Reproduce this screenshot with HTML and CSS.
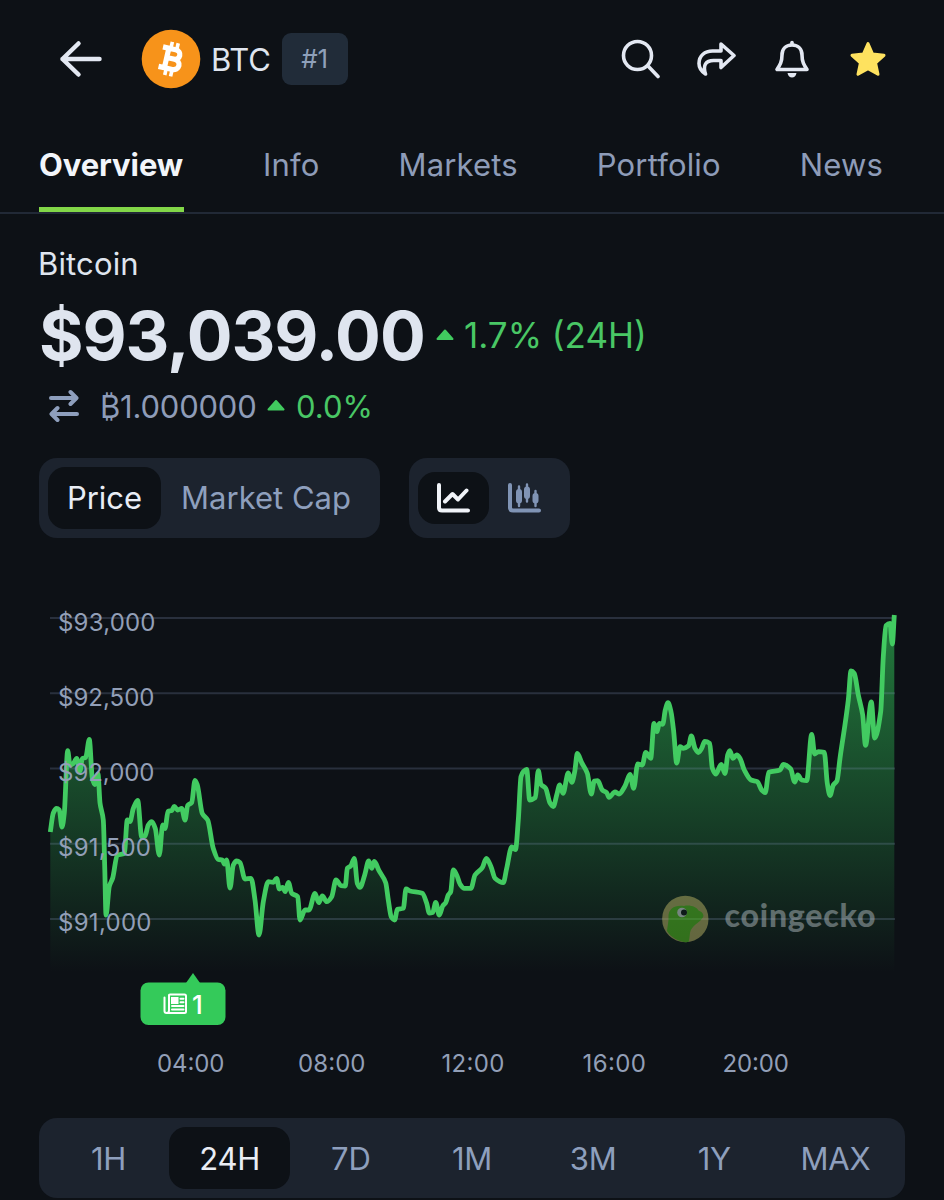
FILE: index.html
```html
<!DOCTYPE html>
<html lang="en">
<head>
    <meta charset="UTF-8">
    <meta name="viewport" content="width=device-width, initial-scale=1.0">
    <title>BTC - Bitcoin Price</title>
    <link rel="stylesheet" href="styles.css">
</head>
<body>
    <header class="topbar">
        <svg class="back" width="44" height="40" viewBox="0 0 44 40">
            <path d="M41.500 20H4.500M20.500 4.500L4.500 20L20.500 35.500"/>
        </svg>
        <svg class="coin" width="60" height="60" viewBox="0 0 60 60">
            <circle cx="30" cy="30" r="29.300" fill="#f7931a"/>
            <g transform="rotate(13 30 30)" fill="none" stroke="#fff">
                <path d="M19.500 20H32.500C39.500 20 39.500 29.500 32.500 29.500H25.500M32.500 29.500C41.500 29.500 41.500 40 32.500 40H19.500M25.500 20V40" stroke-width="5.200"/>
                <path d="M27.500 13V19M33.500 13V19M27.500 41V47M33.500 41V47" stroke-width="3.600"/>
            </g>
        </svg>
        <span class="symbol">BTC</span>
        <span class="rank">#1</span>
        <div class="actions">
            <!-- Search -->
            <svg width="40" height="40" viewBox="0 0 40 40">
                <circle cx="17.500" cy="16.500" r="14"/>
                <path d="M28 27L38 37.500"/>
            </svg>
            <!-- Share -->
            <svg width="40" height="40" viewBox="0 0 40 40">
                <path d="M25 5L38 16.500L25 28.500V21.500H17.500C10 21.500 6.500 26 9.500 35C5 32 3 28.500 3 24.500C3 16.500 9 12 16.500 12H25Z"/>
            </svg>
            <!-- Alerts -->
            <svg width="40" height="40" viewBox="0 0 40 40">
                <path d="M20 6C13.500 6 10 10.500 10 16C10 23 8 26 5 30.500H35C32 26 30 23 30 16C30 10.500 26.500 6 20 6Z"/>
                <path d="M20 3.500V5.500"/>
                <path class="solid" d="M15.500 34H24.500C23.500 40 16.500 40 15.500 34Z"/>
            </svg>
            <!-- Favourite -->
            <svg width="40" height="40" viewBox="0 0 40 40">
                <path class="star" d="M20 4.500L24.600 15L36 16.300L27.600 24L30 35.300L20 29.800L10 35.300L12.400 24L4 16.300L15.400 15Z"/>
            </svg>
        </div>
    </header>

    <nav class="tabs">
        <a class="tab active">Overview</a>
        <a class="tab">Info</a>
        <a class="tab">Markets</a>
        <a class="tab">Portfolio</a>
        <a class="tab">News</a>
    </nav>

    <main>
        <div class="name">Bitcoin</div>
        <div class="price-row">
            <span class="price">$93,039.00</span>
            <svg class="up" width="18" height="12" viewBox="0 0 18 12"><path d="M9 1.500L16.500 10H1.500Z"/></svg>
            <span class="change">1.7% (24H)</span>
        </div>
        <div class="btc-row">
            <svg class="swap" width="30" height="34" viewBox="0 0 30 34">
                <path d="M2 9H27M21.500 3L27.500 9L21.500 15M28 25H3M8.500 19L2.500 25L8.500 31"/>
            </svg>
            <span class="btc-price">₿1.000000</span>
            <svg class="up" width="18" height="12" viewBox="0 0 18 12"><path d="M9 1L16.500 9.500H1.500Z"/></svg>
            <span class="btc-change">0.0%</span>
        </div>

        <div class="controls">
            <div class="switch">
                <span class="option selected">Price</span>
                <span class="option cap">Market Cap</span>
            </div>
            <div class="switch icons">
                <span class="icon-option selected">
                    <svg width="36" height="32" viewBox="0 0 36 32">
                        <path d="M3 3V25.500Q3 28.500 6 28.500H32M9 19.500L16.500 12L22 17.500L30.500 8.500"/>
                    </svg>
                </span>
                <span class="icon-option">
                    <svg width="36" height="32" viewBox="0 0 36 32">
                        <path d="M3 3V25.500Q3 28.500 6 28.500H32"/>
                        <path class="wick" d="M12 4.500V24M20 2.500V19.500M28.500 9V24"/>
                        <path class="candle" d="M12 10V18.500M20 7.500V14M28.500 14V18.500"/>
                    </svg>
                </span>
            </div>
        </div>

        <svg class="chart" width="944" height="520" viewBox="0 580 944 520">
            <defs>
                <linearGradient id="areaFill" gradientUnits="userSpaceOnUse" x1="0" y1="615" x2="0" y2="972">
                    <stop offset="0" stop-color="#2eb552" stop-opacity="0.650"/>
                    <stop offset="1" stop-color="#2eb552" stop-opacity="0"/>
                </linearGradient>
            </defs>
            <path id="area" fill="url(#areaFill)"/>
            <path class="grid" d="M50 618H895M50 693.300H895M50 768.500H895M50 843.800H895M50 919H895"/>
            <path id="line" class="line"/>

            <!-- Price axis -->
            <g class="axis">
                <text x="58" y="630.500" textLength="97.500">$93,000</text>
                <text x="58" y="705.500" textLength="96.500">$92,500</text>
                <text x="58" y="781" textLength="96.500">$92,000</text>
                <text x="58" y="856" textLength="93">$91,500</text>
                <text x="58" y="931.300" textLength="93.500">$91,000</text>
            </g>

            <!-- Watermark -->
            <g class="watermark">
                <circle cx="685.300" cy="919" r="23.200" fill="#b9b265"/>
                <path d="M668.500 917C668 908 676 904.500 684 906C690 904.500 697 907 698.500 910.500C703 912 705 916 702 918.500C699 923 691 926 690 933C689.500 937 689.500 939 688.500 942C681 943 671 938 667 931C667.500 926 668.800 921 668.500 917Z" fill="#56c51f"/>
                <circle cx="682" cy="912.500" r="4.800" fill="#dde6e6"/>
                <circle cx="684" cy="912.500" r="3" fill="#0d1217"/>
                <text x="724.500" y="927" textLength="151">coingecko</text>
            </g>

            <!-- News marker -->
            <path d="M186 983L193 973L200 983Z" fill="#34ca5a"/>
            <rect x="140.500" y="982.500" width="85" height="42.500" rx="8" fill="#34ca5a"/>
            <g class="news">
                <path d="M169 995.500Q169 994.500 170 994.500H184.500Q186 994.500 186 996V1011.500Q186 1013 184.500 1013H166.500Q164.500 1013 164.500 1011V997.500M169 995V1010.500Q169 1013 166.500 1013"/>
                <path d="M180.500 998.800H183.500M180.500 1002.300H183.500M172 1006H183.500M172 1009.500H183.500"/>
                <rect x="172" y="998" width="5.500" height="5" fill="#fff"/>
            </g>
            <text class="news-count" x="192" y="1013.500">1</text>

            <!-- Time axis -->
            <g class="axis">
                <text x="157" y="1072" textLength="67.500">04:00</text>
                <text x="298" y="1072" textLength="67.500">08:00</text>
                <text x="441.500" y="1072" textLength="63">12:00</text>
                <text x="582.500" y="1072" textLength="63.500">16:00</text>
                <text x="722.500" y="1072" textLength="66.500">20:00</text>
            </g>
        </svg>

        <div class="ranges">
            <span>1H</span>
            <span class="selected">24H</span>
            <span>7D</span>
            <span>1M</span>
            <span>3M</span>
            <span>1Y</span>
            <span>MAX</span>
        </div>
    </main>
    <script src="chart.js"></script>
</body>
</html>
```
FILE: styles.css
```css
* {
    box-sizing: border-box;
}
body {
    margin: 0;
    width: 944px;
    height: 1200px;
    overflow: hidden;
    background: #0d1116;
    color: #dfe5ef;
    font-family: Inter, "Liberation Sans", sans-serif;
}
svg {
    display: block;
    flex: none;
}
.topbar {
    display: flex;
    align-items: center;
    height: 118px;
    padding: 0 56px 0 58px;
}
.back {
    fill: none;
    stroke: #e3e8f2;
    stroke-width: 4.5;
    stroke-linecap: round;
    stroke-linejoin: round;
}
.coin {
    margin-left: 39px;
}
.symbol {
    margin-left: 10px;
    font-size: 31px;
    letter-spacing: -0.2px;
}
.rank {
    width: 66px;
    height: 52px;
    margin-left: 11px;
    border-radius: 9px;
    background: #212c39;
    color: #8fa0ba;
    font-size: 26px;
    line-height: 52px;
    text-align: center;
}
.actions {
    display: flex;
    gap: 36px;
    margin-left: auto;
    fill: none;
    stroke: #e3e8f2;
    stroke-width: 3.6;
    stroke-linecap: round;
    stroke-linejoin: round;
}
.actions .solid {
    fill: #e3e8f2;
    stroke: none;
}
.actions .star {
    fill: #fee25f;
    stroke: #fee25f;
    stroke-width: 3;
}
.tabs {
    display: flex;
    justify-content: space-between;
    height: 96px;
    padding: 0 61px 0 39px;
    border-bottom: 2px solid #212936;
}
.tab {
    height: 94px;
    padding-top: 27px;
    color: #8e9cb8;
    font-size: 31px;
    line-height: 40px;
    letter-spacing: 0.15px;
}
.tab.active {
    width: 145px;
    border-bottom: 5px solid #82d748;
    color: #f2f5fa;
    font-weight: 700;
    letter-spacing: -0.1px;
}
.name {
    margin: 30px 0 0 38px;
    font-size: 31px;
    line-height: 40px;
    letter-spacing: 0.15px;
}
.price-row {
    display: flex;
    align-items: center;
    height: 82px;
    margin-top: 10px;
    padding-left: 39px;
}
.price {
    width: 397px;
    font-size: 68px;
    font-weight: 700;
    letter-spacing: -1.05px;
    white-space: nowrap;
}
.up path {
    fill: #41cb5f;
    stroke: #41cb5f;
    stroke-width: 2;
    stroke-linejoin: round;
}
.change {
    margin-left: 10px;
    color: #49c765;
    font-size: 35px;
}
.btc-row {
    display: flex;
    align-items: center;
    height: 40px;
    margin-top: 10px;
    padding-left: 49px;
}
.swap {
    fill: none;
    stroke: #8e9fbd;
    stroke-width: 4;
    stroke-linecap: round;
    stroke-linejoin: round;
}
.btc-price {
    width: 167px;
    margin-left: 21px;
    color: #8e9cb8;
    font-size: 31px;
    letter-spacing: -0.2px;
    white-space: nowrap;
}
.btc-change {
    margin-left: 11px;
    color: #49c765;
    font-size: 31px;
}
.controls {
    display: flex;
    gap: 29px;
    margin-top: 32px;
    padding-left: 39px;
}
.switch {
    display: flex;
    align-items: center;
    width: 341px;
    height: 80px;
    padding: 0 9px;
    border-radius: 18px;
    background: #1c232e;
}
.switch.icons {
    width: 161px;
}
.selected {
    background: #0d1116;
    color: #e9edf5;
}
.option {
    height: 62px;
    border-radius: 17px;
    font-size: 31px;
    line-height: 62px;
    text-align: center;
}
.option.selected {
    width: 113px;
}
.option.cap {
    flex: 1;
    color: #8e9fbd;
}
.icon-option {
    display: flex;
    align-items: center;
    justify-content: center;
    width: 71px;
    height: 52px;
    border-radius: 17px;
    fill: none;
    stroke: #8094b5;
    stroke-width: 4;
    stroke-linecap: round;
    stroke-linejoin: round;
}
.icon-option.selected {
    stroke: #f1f4f9;
}
.icon-option .wick {
    stroke-width: 2.4;
}
.icon-option .candle {
    stroke-width: 6;
}
.chart {
    margin-top: 42px;
}
.grid {
    fill: none;
    stroke: #8ca0c8;
    stroke-opacity: 0.22;
    stroke-width: 2;
}
.line {
    fill: none;
    stroke: #42cb61;
    stroke-width: 4.8;
    stroke-linejoin: round;
}
.axis {
    fill: #929fb7;
    font-size: 24px;
}
.watermark {
    opacity: 0.5;
}
.watermark text {
    fill: #aeb8bd;
    font-family: Lato, sans-serif;
    font-size: 32px;
    font-weight: 900;
}
.news {
    fill: none;
    stroke: #fff;
    stroke-width: 2;
    stroke-linecap: round;
}
.news-count {
    fill: #fff;
    font-size: 26px;
    font-weight: 500;
}
.ranges {
    display: grid;
    grid-template-columns: repeat(7, 1fr);
    width: 866px;
    height: 80px;
    margin: 18px 0 0 39px;
    padding: 9px;
    border-radius: 18px;
    background: #1c232e;
    color: #8e9fbd;
    font-size: 31px;
    line-height: 63px;
    letter-spacing: -0.2px;
    text-align: center;
}
.ranges span {
    height: 62px;
    border-radius: 17px;
}
```
FILE: chart.js
```js
// price line over the last 24 hours, in chart coordinates
const points = [
    [50.3, 832], [53.3, 813], [56.5, 808.5], [59.3, 810], [62, 827], [64.3, 813], [67.7, 750.7], [70, 765],
    [73.3, 763.5], [76.7, 758.5], [80, 771], [82.3, 758.5], [85.7, 757.5], [89.3, 739.5], [92.3, 778], [94.7, 784.5],
    [98, 774], [100, 803], [103.3, 820], [104.8, 870], [106, 915], [109.3, 886.5], [112.7, 878], [117.3, 855],
    [124.3, 853.5], [127.3, 820], [130, 821.5], [133.3, 808.5], [137.7, 800.5], [141.7, 837], [145, 836], [148.3, 825],
    [151.7, 821.7], [155.3, 828.5], [159.3, 855], [162.7, 825], [165, 828.5], [168, 811.5], [171.7, 810.5], [174.3, 806.5],
    [177.7, 810], [181.7, 808.5], [185, 820], [187.7, 805.5], [191.7, 802.5], [195, 780.5], [197.3, 785], [202.3, 813.5],
    [207.7, 820], [213.3, 848.5], [218.3, 859.5], [222.5, 860], [224.3, 864], [226.7, 860], [230, 888], [233.3, 865],
    [236.7, 861], [240, 862.5], [245, 879], [251, 878.3], [255, 900], [259, 935], [263.3, 901.7], [268.3, 881.7],
    [273.3, 882.3], [276.7, 878.3], [279.3, 889], [282.7, 887.5], [285.3, 891.7], [288.3, 882.3], [291.7, 893.3],
    [297.7, 896.7], [300, 920], [305, 910], [309, 910], [315, 893.3], [318.7, 902.7], [322.3, 896], [326.7, 901.7],
    [331.7, 896.7], [336, 880], [341, 885.7], [345.3, 886], [347.3, 868.3], [350.7, 866], [354.3, 858.3], [357.3, 883.3],
    [360, 887.3], [364.7, 875], [368.7, 861], [371.7, 868.3], [374.3, 861.5], [379, 870.7], [385.7, 882.7], [388.3, 900],
    [391.3, 917], [394.7, 920], [397.3, 909.3], [403.3, 908.3], [406, 889], [410, 891], [422.3, 893.3], [426.7, 903.3],
    [429.3, 913], [432.7, 912.5], [435.7, 902.5], [439.3, 915], [442.7, 906], [445.7, 902.7], [448.3, 895], [450.7, 891.7],
    [453.3, 870], [456.7, 875], [460, 884], [464.3, 888.3], [471, 888.3], [475, 875], [482.3, 867.7], [486.3, 858.3],
    [491, 866.7], [495, 878.3], [503.3, 882.7], [506.7, 868.3], [511.7, 847], [515.5, 849.5], [518.3, 820], [521, 776.7],
    [523.5, 771.5], [526.7, 769.3], [529.7, 800], [535.3, 797.7], [538.3, 770.7], [541, 784.3], [545.7, 788.3], [550, 803],
    [553.3, 806.5], [556.7, 795], [559.7, 785], [563, 793.3], [568.3, 773], [571.7, 782.3], [574.7, 771.7], [577.3, 753.5],
    [581.7, 762.7], [587.3, 773.3], [591.3, 794], [594.3, 781], [597.7, 780.7], [602.3, 790], [606.7, 792.7], [609, 797.3],
    [615, 792], [619, 794], [625, 786], [630, 774.5], [633.7, 788.3], [637.7, 764], [642.3, 765], [645.7, 752.5],
    [650.7, 758.3], [654, 723.5], [657, 731.7], [659.3, 723.3], [662.7, 724.3], [665.3, 710], [668, 702.7], [671, 711.7],
    [673.7, 731.7], [676.7, 763], [680, 746.7], [683.3, 748.3], [688.7, 745.7], [691.3, 736], [695, 748.3], [698.3, 752.5],
    [701.7, 748.3], [704.7, 741.3], [709.7, 743.3], [712.3, 768], [715.7, 774], [721.3, 764.5], [725, 773.5], [727.7, 755],
    [729.7, 750.7], [733, 758.3], [736.7, 755], [740, 758.3], [744.3, 770], [751, 780], [757.3, 781.7], [761.7, 790],
    [765.3, 792.7], [768.7, 772.3], [780, 770], [783.3, 764.5], [790.7, 769], [794.7, 782], [797.7, 775], [801.7, 780],
    [806.7, 780.7], [811.7, 734.3], [814.7, 754], [818.3, 751.7], [824.3, 752.3], [827.3, 783.3], [830, 795.5],
    [833.3, 785], [837, 780.7], [840, 758.3], [848.3, 700], [851, 671], [854.3, 673.5], [858.3, 695], [862.7, 715],
    [865.5, 745.3], [871.3, 702], [874.7, 738], [880.7, 711.7], [883.3, 656.7], [886, 625.7], [890, 623.5],
    [892.3, 644], [894.3, 615]
];

// tangent at a point: flat on peaks and dips, so the curve never overshoots
function slope(i) {
    const prev = points[i - 1], cur = points[i], next = points[i + 1];
    if (!prev || !next) {
        return null;
    }
    const a = (cur[1] - prev[1]) / (cur[0] - prev[0]);
    const b = (next[1] - cur[1]) / (next[0] - cur[0]);
    return a * b <= 0 ? 0 : 2 * a * b / (a + b);
}

let d = 'M' + points[0].join(' ');
for (let i = 1; i < points.length; i++) {
    const [x0, y0] = points[i - 1];
    const [x1, y1] = points[i];
    const dx = (x1 - x0) / 3;
    const straight = (y1 - y0) / (x1 - x0);
    const m0 = slope(i - 1) ?? straight;
    const m1 = slope(i) ?? straight;
    d += `C${x0 + dx} ${y0 + dx * m0} ${x1 - dx} ${y1 - dx * m1} ${x1} ${y1}`;
}

document.getElementById('line').setAttribute('d', d);
document.getElementById('area').setAttribute('d', d + 'V972H50.300Z');
```
